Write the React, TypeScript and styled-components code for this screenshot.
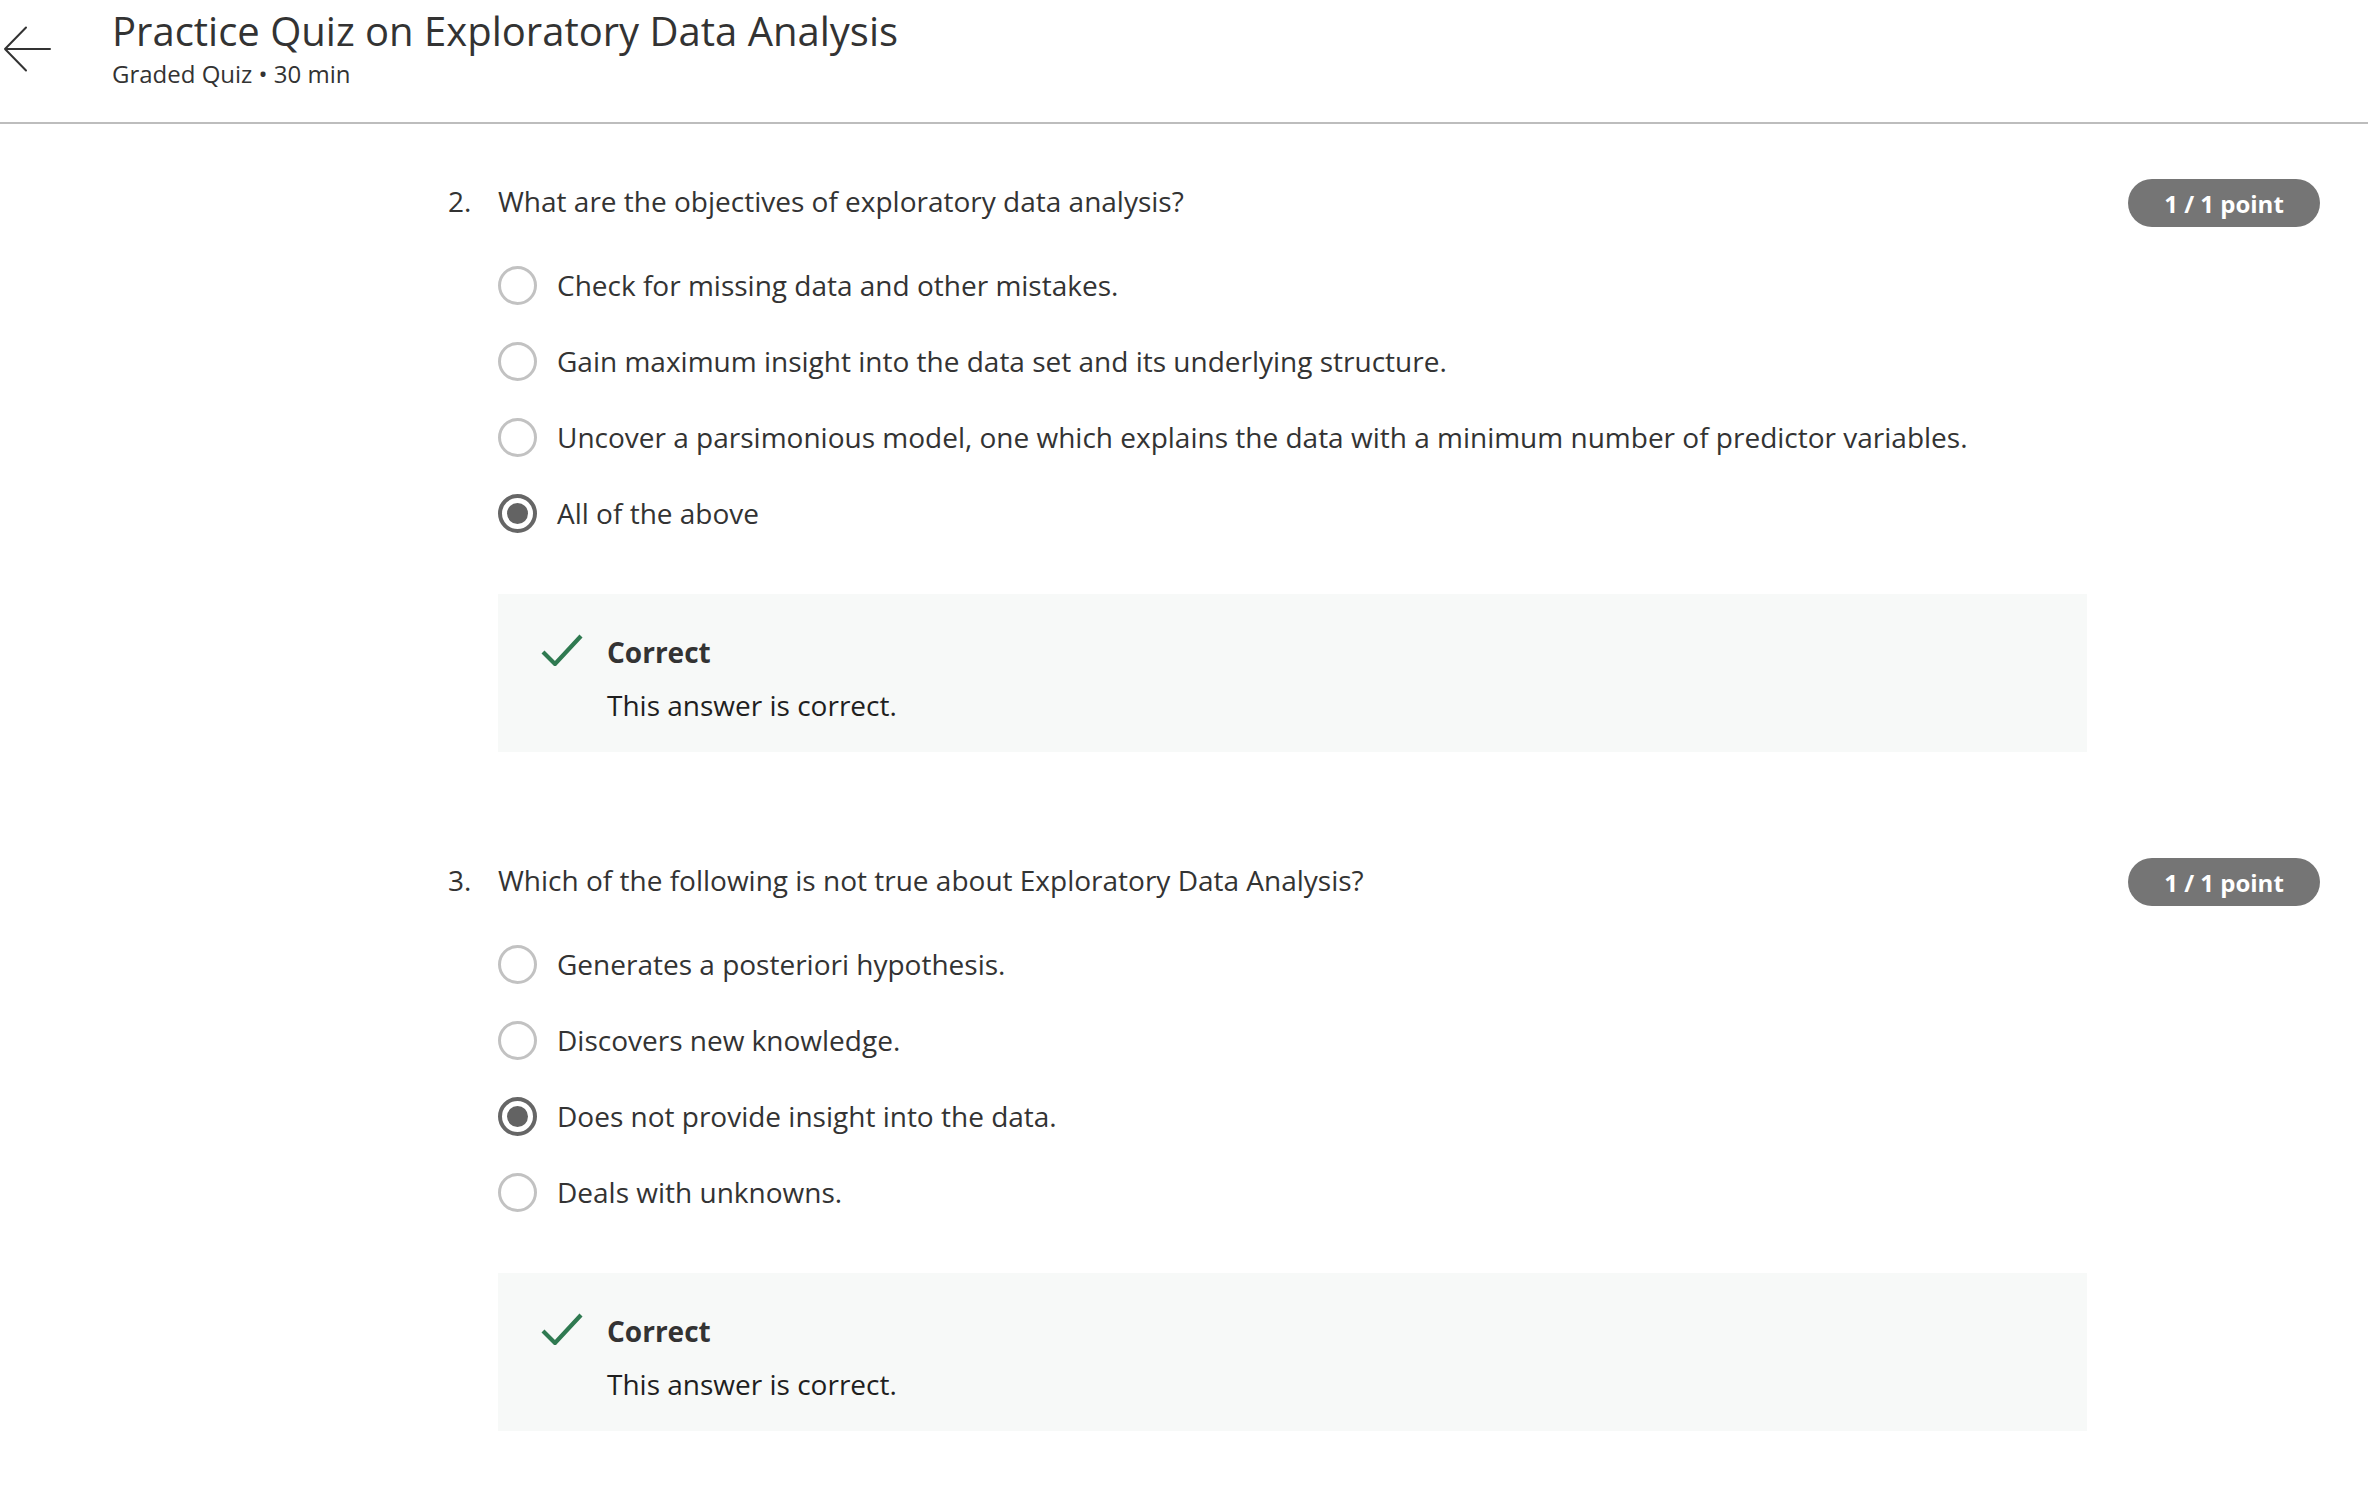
import styled, { createGlobalStyle } from "styled-components";

const GlobalStyle = createGlobalStyle`
  * {
    box-sizing: border-box;
  }
  body {
    margin: 0;
    background: #ffffff;
    font-family: "Open Sans", "Noto Sans", sans-serif;
    color: #333333;
  }
`;

interface Question {
  number: number;
  text: string;
  options: string[];
  selected: number;
  score: string;
  feedbackTitle: string;
  feedbackText: string;
}

const questions: Question[] = [
  {
    number: 2,
    text: "What are the objectives of exploratory data analysis?",
    options: [
      "Check for missing data and other mistakes.",
      "Gain maximum insight into the data set and its underlying structure.",
      "Uncover a parsimonious model, one which explains the data with a minimum number of predictor variables.",
      "All of the above",
    ],
    selected: 3,
    score: "1 / 1 point",
    feedbackTitle: "Correct",
    feedbackText: "This answer is correct.",
  },
  {
    number: 3,
    text: "Which of the following is not true about Exploratory Data Analysis?",
    options: [
      "Generates a posteriori hypothesis.",
      "Discovers new knowledge.",
      "Does not provide insight into the data.",
      "Deals with unknowns.",
    ],
    selected: 2,
    score: "1 / 1 point",
    feedbackTitle: "Correct",
    feedbackText: "This answer is correct.",
  },
];

function BackArrow() {
  return (
    <svg width="50" height="48" viewBox="0 0 50 48" fill="none">
      <path
        d="M48 24H3M3 24L24 2.5M3 24L24 45.5"
        stroke="#333333"
        strokeWidth="2"
        strokeLinecap="round"
        strokeLinejoin="round"
      />
    </svg>
  );
}

function CheckIcon() {
  return (
    <svg width="42" height="32" viewBox="0 0 42 32" fill="none">
      <path d="M2 18L14 30L40 2" stroke="#2f7a51" strokeWidth="4.2" />
    </svg>
  );
}

export default function App() {
  return (
    <>
      <GlobalStyle />
      <Header>
        <BackButton aria-label="Back">
          <BackArrow />
        </BackButton>
        <HeaderText>
          <Title>Practice Quiz on Exploratory Data Analysis</Title>
          <Subtitle>Graded Quiz • 30 min</Subtitle>
        </HeaderText>
      </Header>
      <Main>
        {questions.map((q) => (
          <QuestionBlock key={q.number}>
            <Number>{q.number}.</Number>
            <Body>
              <Prompt>{q.text}</Prompt>
              <Options>
                {q.options.map((opt, i) => (
                  <Option key={opt}>
                    <Radio checked={i === q.selected} />
                    <OptionLabel>{opt}</OptionLabel>
                  </Option>
                ))}
              </Options>
              <Feedback>
                <CheckWrap>
                  <CheckIcon />
                </CheckWrap>
                <FeedbackText>
                  <FeedbackTitle>{q.feedbackTitle}</FeedbackTitle>
                  <FeedbackBody>{q.feedbackText}</FeedbackBody>
                </FeedbackText>
              </Feedback>
            </Body>
            <Badge>{q.score}</Badge>
          </QuestionBlock>
        ))}
      </Main>
    </>
  );
}

const Header = styled.header`
  display: flex;
  align-items: flex-start;
  height: 124px;
  border-bottom: 2px solid #bdbdbd;
`;

const BackButton = styled.button`
  display: flex;
  align-items: center;
  justify-content: center;
  width: 54px;
  height: 48px;
  margin-top: 25px;
  padding: 0;
  background: transparent;
  border: none;
  cursor: pointer;
`;

const HeaderText = styled.div`
  display: flex;
  flex-direction: column;
  margin-left: 58px;
  padding-top: 4px;
`;

const Title = styled.h1`
  margin: 0;
  font-size: 40px;
  font-weight: 400;
  line-height: 54px;
  color: #333333;
`;

const Subtitle = styled.p`
  margin: 0;
  font-size: 24px;
  line-height: 32px;
  color: #333333;
`;

const Main = styled.main`
  padding: 57px 48px 40px 448px;
`;

const QuestionBlock = styled.section`
  display: flex;
  align-items: flex-start;
  margin-bottom: 108px;

  &:last-child {
    margin-bottom: 0;
  }
`;

const Number = styled.span`
  width: 50px;
  flex-shrink: 0;
  font-size: 28px;
  line-height: 40px;
`;

const Body = styled.div`
  flex: 1;
  display: flex;
  flex-direction: column;
`;

const Prompt = styled.p`
  margin: 0 0 26px;
  font-size: 28px;
  line-height: 40px;
  color: #333333;
`;

const Options = styled.div`
  display: flex;
  flex-direction: column;
`;

const Option = styled.label`
  display: flex;
  align-items: center;
  height: 76px;
  cursor: pointer;
`;

const Radio = styled.span<{ checked: boolean }>`
  position: relative;
  width: 39px;
  height: 39px;
  flex-shrink: 0;
  border-radius: 50%;
  border: ${(p) => (p.checked ? "4px solid #666666" : "3.5px solid #c2c2c2")};

  &::after {
    content: "";
    display: ${(p) => (p.checked ? "block" : "none")};
    position: absolute;
    top: 50%;
    left: 50%;
    width: 21px;
    height: 21px;
    margin: -10.5px 0 0 -10.5px;
    border-radius: 50%;
    background: #636363;
  }
`;

const OptionLabel = styled.span`
  margin-left: 20px;
  font-size: 28px;
  line-height: 40px;
  color: #333333;
`;

const Feedback = styled.div`
  display: flex;
  align-items: flex-start;
  margin-top: 43px;
  padding: 40px 44px 29px 43px;
  background: #f7f9f8;
`;

const CheckWrap = styled.div`
  width: 42px;
  flex-shrink: 0;
  margin-right: 24px;
`;

const FeedbackText = styled.div`
  display: flex;
  flex-direction: column;
  gap: 17px;
`;

const FeedbackTitle = styled.span`
  font-size: 28px;
  font-weight: 700;
  line-height: 36px;
  color: #333333;
`;

const FeedbackBody = styled.span`
  font-size: 28px;
  line-height: 36px;
  color: #1f1f1f;
`;

const Badge = styled.span`
  flex-shrink: 0;
  display: flex;
  align-items: center;
  justify-content: center;
  width: 192px;
  height: 48px;
  margin-left: 41px;
  margin-top: -2px;
  border-radius: 24px;
  background: #757575;
  color: #ffffff;
  font-size: 24px;
  font-weight: 700;
`;
